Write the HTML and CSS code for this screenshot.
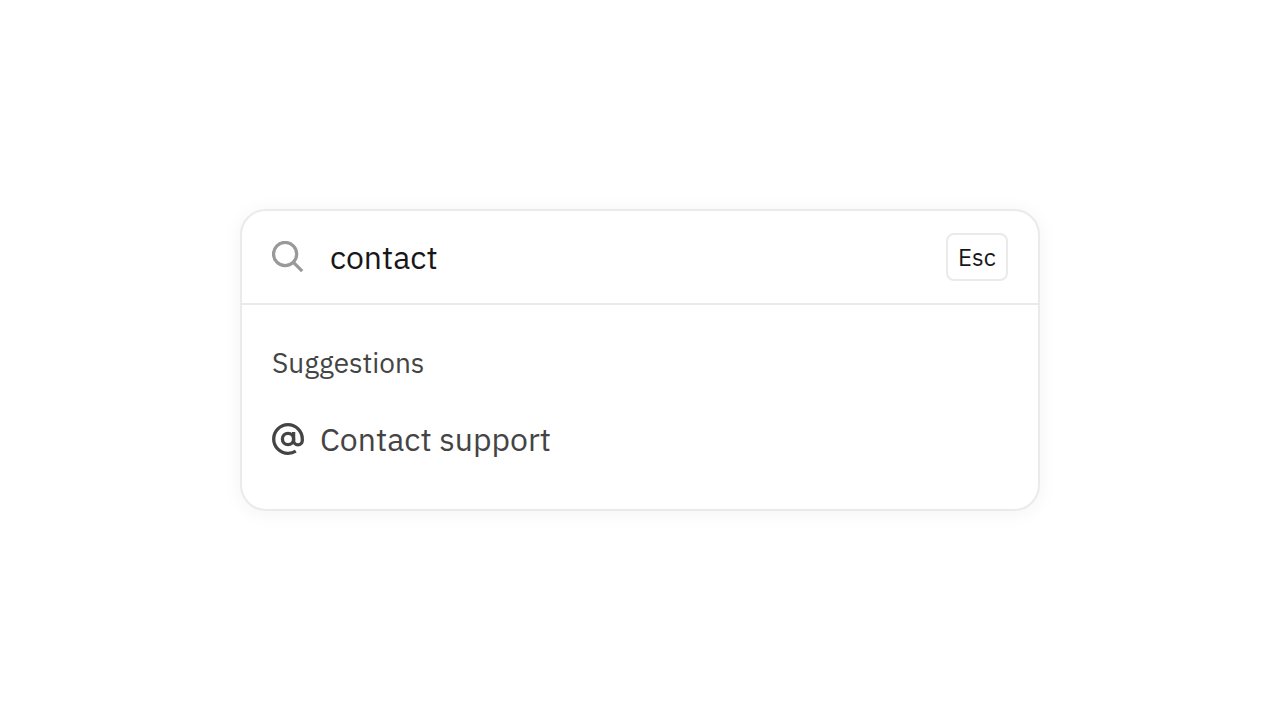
FILE: index.html
```html
<!DOCTYPE html>
<html lang="en">
<head>
    <meta charset="UTF-8">
    <meta name="viewport" content="width=device-width, initial-scale=1.0">
    <title>Command Menu</title>
    <link rel="stylesheet" href="styles.css">
</head>
<body>
    <main class="command-menu">
        <!-- Search bar -->
        <form class="search" role="search">
            <label class="search-label" for="search-input" aria-label="Search">
                <svg class="icon" viewBox="0 0 32 32" fill="none" stroke="currentColor" stroke-width="3.2" aria-hidden="true">
                    <circle cx="13.1" cy="13" r="11.6"/>
                    <path d="M21.4 21.4L30.2 30.2"/>
                </svg>
            </label>
            <input class="search-input" id="search-input" type="text" value="contact" autocomplete="off" spellcheck="false">
            <button class="esc" type="button">Esc</button>
        </form>

        <!-- Results -->
        <section class="results">
            <h2 class="results-title">Suggestions</h2>
            <a class="result" href="#">
                <svg class="icon" viewBox="0 0 32 32" fill="none" stroke="currentColor" stroke-width="3.3" aria-hidden="true">
                    <circle cx="16" cy="16" r="5.6"/>
                    <path d="M21.6 9V17.6A4.3 4.3 0 0 0 30.3 17.6V16A14.3 14.3 0 1 0 16 30.3C18.9 30.3 21.5 29.6 23.8 28.2"/>
                </svg>
                <span>Contact support</span>
            </a>
        </section>
    </main>
</body>
</html>
```

FILE: styles.css
```css
:root {
    --border: #eaeaea;
    --text: #171717;
    --text-muted: #444444;
    --icon: #999999;
}

* {
    box-sizing: border-box;
}

body {
    margin: 0;
    min-height: 100vh;
    display: flex;
    justify-content: center;
    align-items: center;
    background: #ffffff;
    font-family: 'IBM Plex Sans', Roboto, sans-serif;
    color: var(--text);
}

.command-menu {
    width: 100%;
    max-width: 800px;
    background: #ffffff;
    border: 2px solid var(--border);
    border-radius: 26px;
    box-shadow: 0 2px 20px rgba(0, 0, 0, 0.05);
}

.search {
    display: flex;
    align-items: center;
    padding: 22px 30px;
    border-bottom: 2px solid var(--border);
}

.search-label {
    display: flex;
    margin-right: 26px;
    color: var(--icon);
}

.icon {
    display: block;
    flex: none;
    width: 32px;
    height: 32px;
}

.search-input {
    flex: 1;
    min-width: 0;
    height: 48px;
    padding: 0;
    border: none;
    outline: none;
    background: transparent;
    font: inherit;
    font-size: 32px;
    color: inherit;
}

.esc {
    width: 62px;
    height: 48px;
    padding: 0;
    border: 2px solid var(--border);
    border-radius: 8px;
    background: #ffffff;
    font: inherit;
    font-size: 24px;
    color: inherit;
    cursor: pointer;
}

.results {
    padding: 40px 30px 46px;
    color: var(--text-muted);
}

.results-title {
    margin: 0 0 34px;
    font-size: 28px;
    font-weight: 400;
    line-height: 36px;
}

.result {
    display: flex;
    align-items: center;
    gap: 16px;
    font-size: 32px;
    line-height: 48px;
    color: inherit;
    text-decoration: none;
}
```
